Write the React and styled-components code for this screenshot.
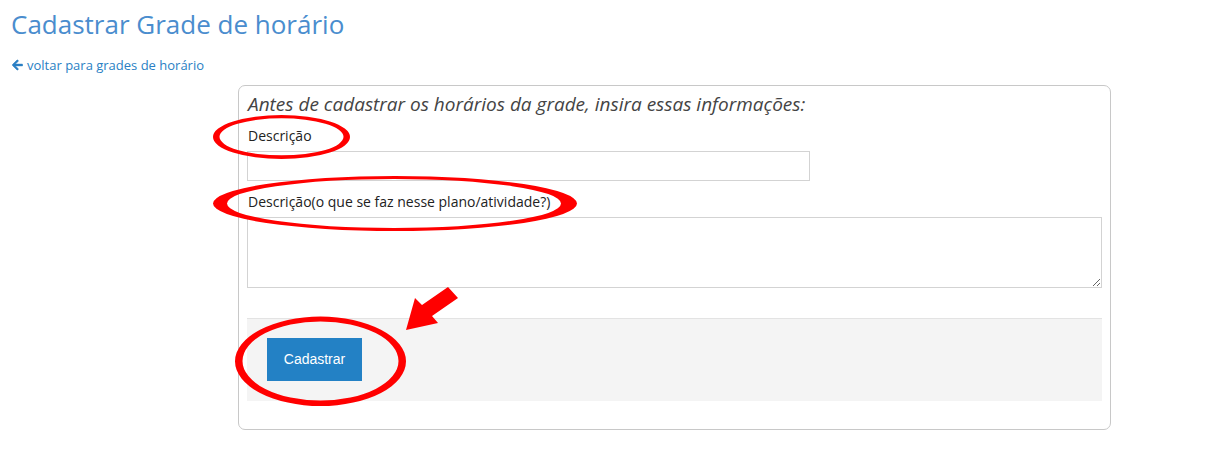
import React from "react";
import styled, { createGlobalStyle } from "styled-components";

const Global = createGlobalStyle`
  html, body { margin: 0; padding: 0; background: #fff; }
  body { font-family: "Open Sans", "DejaVu Sans", sans-serif; color: #222; }
  * { box-sizing: border-box; }
`;

const Page = styled.div`
  position: relative;
  width: 1205px;
  height: 453px;
  padding: 10px 0 0 11px;
  overflow: hidden;
`;

const Title = styled.h1`
  margin: 0;
  font-size: 26px;
  line-height: 28.6px;
  font-weight: 400;
  color: #4a8dce;
`;

const BackLink = styled.a`
  display: flex;
  width: fit-content;
  align-items: center;
  gap: 4px;
  margin-top: 17px;
  font-size: 13px;
  line-height: 18.6px;
  color: #2a7fc4;
  text-decoration: none;
  padding-left: 1px;
`;

const Panel = styled.section`
  margin: 11px 0 0 227px;
  width: 873px;
  border: 1px solid #c8c8c8;
  border-radius: 7px;
  padding: 5.5px 8px 28px 8px;
  display: flex;
  flex-direction: column;
`;

const Intro = styled.h2`
  margin: 0 0 10px 1px;
  font-size: 19px;
  line-height: 24px;
  font-weight: 400;
  font-style: italic;
  color: #444;
`;

const Label = styled.label`
  display: block;
  margin: ${(p) => p.$top || 0}px 0 5px 1px;
  font-size: 14px;
  line-height: 20px;
  color: #222;
`;

const TextInput = styled.input`
  display: block;
  width: ${(p) => p.$width || "100%"};
  height: 30px;
  margin: 0;
  border: 1px solid #d3d3d3;
  padding: 4px 6px;
  font: inherit;
  font-size: 13px;
  outline: none;
`;

const TextArea = styled.textarea`
  display: block;
  width: 100%;
  height: 71px;
  margin: 0;
  border: 1px solid #d3d3d3;
  padding: 4px 6px;
  font: inherit;
  font-size: 13px;
  outline: none;
`;

const Footer = styled.div`
  margin-top: 30px;
  background: #f4f4f4;
  border-top: 1px solid #e3e3e3;
  padding: 19px 20px 20px 20px;
  display: flex;
`;

const Button = styled.button`
  width: 95px;
  height: 43px;
  border: none;
  background: #2381c5;
  color: #fff;
  font-family: "Liberation Sans", Arial, sans-serif;
  font-size: 14px;
  cursor: pointer;
`;

const Annotations = styled.svg`
  position: absolute;
  left: 0;
  top: 0;
  pointer-events: none;
`;

const ArrowIcon = () => (
  <svg width="11" height="12" viewBox="0 0 448 512" aria-hidden="true">
    <path
      fill="currentColor"
      stroke="currentColor"
      strokeWidth="20"
      d="M257.5 445.1l-22.2 22.2c-9.4 9.4-24.6 9.4-33.9 0L7 273c-9.4-9.4-9.4-24.6 0-33.9L201.4 44.7c9.4-9.4 24.6-9.4 33.9 0l22.2 22.2c9.5 9.5 9.3 25-.4 34.3L136.6 216H424c13.3 0 24 10.7 24 24v32c0 13.3-10.7 24-24 24H136.6l120.5 114.8c9.8 9.3 10 24.8.4 34.3z"
    />
  </svg>
);

const ring = (cx, cy, rx, ry, icx, icy, irx, iry) =>
  `M${cx - rx},${cy} a${rx},${ry} 0 1,0 ${2 * rx},0 a${rx},${ry} 0 1,0 ${-2 * rx},0 Z ` +
  `M${icx - irx},${icy} a${irx},${iry} 0 1,0 ${2 * irx},0 a${irx},${iry} 0 1,0 ${-2 * irx},0 Z`;

export default function App() {
  return (
    <>
      <Global />
      <Page>
        <Title>Cadastrar Grade de horário</Title>
        <BackLink href="#">
          <ArrowIcon />
          voltar para grades de horário
        </BackLink>
        <Panel>
          <Intro>Antes de cadastrar os horários da grade, insira essas informações:</Intro>
          <Label>Descrição</Label>
          <TextInput type="text" $width="563px" />
          <Label $top={11}>Descrição(o que se faz nesse plano/atividade?)</Label>
          <TextArea />
          <Footer>
            <Button type="button">Cadastrar</Button>
          </Footer>
        </Panel>
        <Annotations width="1205" height="453" viewBox="0 0 1205 453">
          <path fill="#f00" fillRule="evenodd" d={ring(281.5, 137, 68.5, 22, 281.5, 136.8, 62, 18.5)} />
          <path fill="#f00" fillRule="evenodd" d={ring(395, 203.5, 182, 27.5, 394, 203.5, 167, 24.5)} />
          <path fill="#f00" fillRule="evenodd" d={ring(320.5, 361.3, 85.5, 44.7, 320.5, 361, 78, 39.5)} />
          <polygon fill="#f00" points="448,287 458,298 432,316 438,323 406,330 415,298 422,305" />
        </Annotations>
      </Page>
    </>
  );
}
